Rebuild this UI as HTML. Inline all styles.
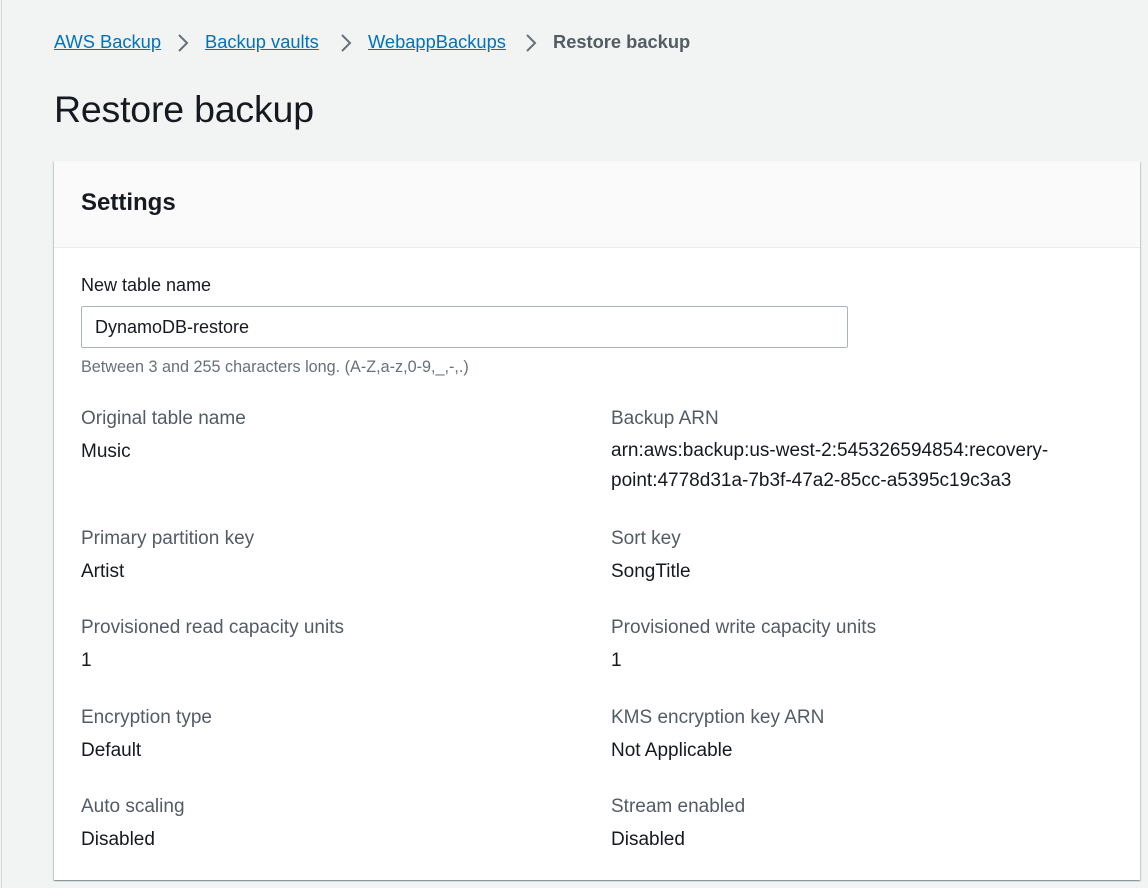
<!DOCTYPE html>
<html><head><meta charset="utf-8"><style>
html,body{margin:0;padding:0;}
body{width:1148px;height:888px;background:#f2f3f3;font-family:"Liberation Sans",sans-serif;position:relative;overflow:hidden;}
.t{position:absolute;white-space:nowrap;}
.bc{top:31px;font-size:18.3px;}
.bc a{color:#0073bb;text-decoration:underline;}
.chev{position:absolute;top:33px;}
h1{position:absolute;left:54px;top:88px;margin:0;font-size:37.5px;font-weight:normal;color:#16191f;letter-spacing:-0.2px;}
.card{position:absolute;left:54px;top:161px;width:1086px;height:719px;background:#fff;box-shadow:0 1px 1px rgba(0,28,36,.3),1px 1px 1px rgba(0,28,36,.15),-1px 1px 1px rgba(0,28,36,.15);}
.hdr{position:absolute;left:0;top:0;width:1086px;height:86px;background:#fafafa;border-bottom:1px solid #eaeded;}
.lab{font-size:19px;color:#545b64;}
.val{font-size:19px;color:#16191f;}
</style></head><body>
<div style="position:absolute;left:1px;top:0;width:1px;height:888px;background:#d5dbdb"></div>
<div class="t bc" style="left:54px"><a>AWS Backup</a></div>
<div class="t bc" style="left:205px"><a>Backup vaults</a></div>
<div class="t bc" style="left:368px"><a>WebappBackups</a></div>
<div class="t bc" style="left:553px;color:#545b64;font-weight:bold">Restore backup</div>
<svg class="chev" style="left:176px" width="14" height="20"><path d="M3 2 L11 10 L3 18" stroke="#687078" stroke-width="2" fill="none"/></svg>
<svg class="chev" style="left:339px" width="14" height="20"><path d="M3 2 L11 10 L3 18" stroke="#687078" stroke-width="2" fill="none"/></svg>
<svg class="chev" style="left:524px" width="14" height="20"><path d="M3 2 L11 10 L3 18" stroke="#687078" stroke-width="2" fill="none"/></svg>
<h1>Restore backup</h1>
<div class="card">
<div class="hdr"></div>
<div class="t" style="left:27px;top:28px;font-size:24px;font-weight:bold;color:#16191f">Settings</div>
<div class="t val" style="left:27px;top:114px;font-size:18px">New table name</div>
<div style="position:absolute;left:27px;top:145px;width:765px;height:40px;border:1px solid #aab7b8;border-radius:2px;"></div>
<div class="t val" style="left:41px;top:156px;font-size:18px">DynamoDB-restore</div>
<div class="t" style="left:27px;top:197px;font-size:16.2px;color:#687078">Between 3 and 255 characters long. (A-Z,a-z,0-9,_,-,.)</div>

<div class="t lab" style="left:27px;top:247px">Original table name</div>
<div class="t val" style="left:27px;top:280px">Music</div>
<div class="t lab" style="left:557px;top:247px">Backup ARN</div>
<div class="t val" style="left:557px;top:280px;line-height:30px;margin-top:-5px">arn:aws:backup:us-west-2:545326594854:recovery-<br>point:4778d31a-7b3f-47a2-85cc-a5395c19c3a3</div>

<div class="t lab" style="left:27px;top:367px">Primary partition key</div>
<div class="t val" style="left:27px;top:400px">Artist</div>
<div class="t lab" style="left:557px;top:367px">Sort key</div>
<div class="t val" style="left:557px;top:400px">SongTitle</div>

<div class="t lab" style="left:27px;top:456px">Provisioned read capacity units</div>
<div class="t val" style="left:27px;top:489px">1</div>
<div class="t lab" style="left:557px;top:456px">Provisioned write capacity units</div>
<div class="t val" style="left:557px;top:489px">1</div>

<div class="t lab" style="left:27px;top:546px">Encryption type</div>
<div class="t val" style="left:27px;top:579px">Default</div>
<div class="t lab" style="left:557px;top:546px">KMS encryption key ARN</div>
<div class="t val" style="left:557px;top:579px">Not Applicable</div>

<div class="t lab" style="left:27px;top:635px">Auto scaling</div>
<div class="t val" style="left:27px;top:668px">Disabled</div>
<div class="t lab" style="left:557px;top:635px">Stream enabled</div>
<div class="t val" style="left:557px;top:668px">Disabled</div>
</div>
</body></html>
